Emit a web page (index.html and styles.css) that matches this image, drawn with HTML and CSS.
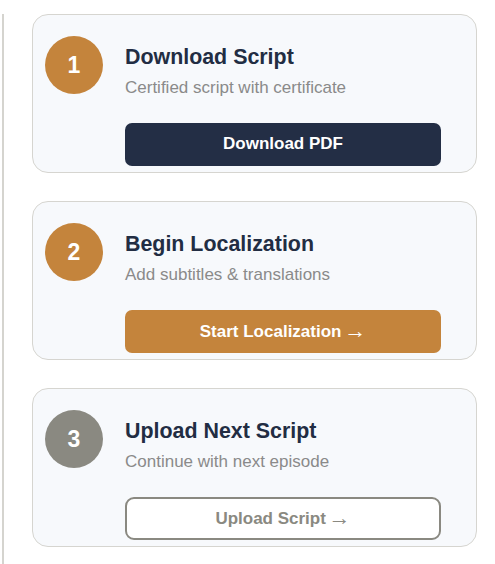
FILE: index.html
```html
<!DOCTYPE html>
<html lang="en">
<head>
    <meta charset="UTF-8">
    <meta name="viewport" content="width=device-width, initial-scale=1.0">
    <title>Next Steps</title>
    <link rel="stylesheet" href="styles.css">
</head>
<body>
    <div class="steps">
        <div class="step">
            <div class="step-num">1</div>
            <div class="step-body">
                <h3>Download Script</h3>
                <p>Certified script with certificate</p>
                <button class="btn btn-dark">Download PDF</button>
            </div>
        </div>
        <div class="step">
            <div class="step-num">2</div>
            <div class="step-body">
                <h3>Begin Localization</h3>
                <p>Add subtitles &amp; translations</p>
                <button class="btn btn-gold">Start Localization <span class="arrow">&rarr;</span></button>
            </div>
        </div>
        <div class="step">
            <div class="step-num muted">3</div>
            <div class="step-body">
                <h3>Upload Next Script</h3>
                <p>Continue with next episode</p>
                <button class="btn btn-outline">Upload Script <span class="arrow">&rarr;</span></button>
            </div>
        </div>
    </div>
</body>
</html>
```

FILE: styles.css
```css
body {
    margin: 0;
    padding: 14px 18px 0 2px;
    background-color: #ffffff;
    font-family: 'Liberation Sans', Arial, sans-serif;
}
.steps {
    display: flex;
    flex-direction: column;
    gap: 28.5px;
    padding-left: 28px;
    border-left: 2px solid #d5d4cf;
    min-height: 550px;
}
.step {
    display: grid;
    grid-template-columns: 58px 1fr;
    column-gap: 22px;
    padding: 21px 35px 6px 12px;
    background-color: #f7f9fc;
    border: 1px solid #d6d5d0;
    border-radius: 16px;
}
.step-num {
    width: 58px;
    height: 58px;
    border-radius: 50%;
    background-color: #c4843c;
    color: #ffffff;
    font-size: 23px;
    font-weight: bold;
    display: flex;
    align-items: center;
    justify-content: center;
}
.step-num.muted {
    background-color: #8a8981;
}
.step-body {
    padding-top: 9px;
    display: flex;
    flex-direction: column;
}
.step-body h3 {
    margin: 0 0 8px;
    font-size: 21.4px;
    font-weight: bold;
    color: #222d43;
}
.step-body p {
    margin: 0 0 24.5px;
    font-size: 17px;
    color: #8a8a8a;
}
.btn {
    height: 43px;
    border: none;
    border-radius: 7px;
    font-family: inherit;
    font-size: 17px;
    font-weight: bold;
    color: #ffffff;
    cursor: pointer;
}
.btn .arrow {
    margin-left: -2px;
    font-weight: normal;
    font-size: 22px;
    line-height: 1;
    vertical-align: -1px;
}
.btn-dark {
    background-color: #232e45;
}
.btn-gold {
    background-color: #c4843c;
}
.btn-outline {
    background-color: #ffffff;
    border: 2px solid #8a8981;
    border-radius: 9px;
    color: #8a8981;
}
```
